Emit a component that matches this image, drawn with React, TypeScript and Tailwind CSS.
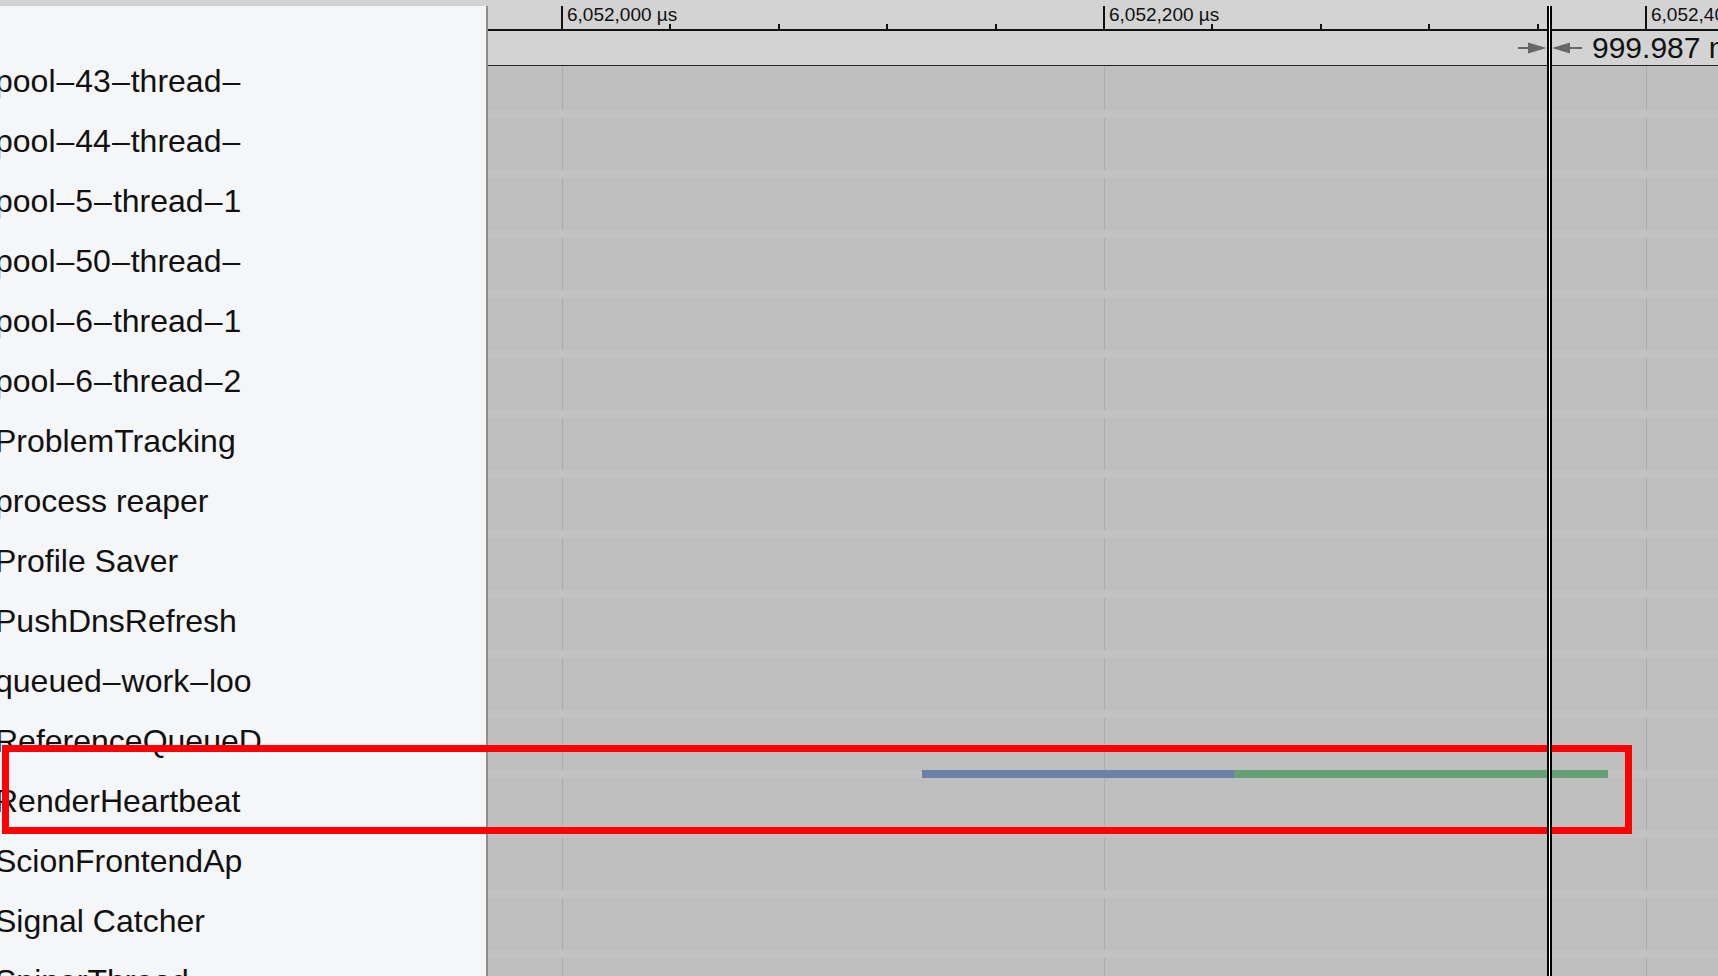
const TRACKS = [
  'pool-43-thread-',
  'pool-44-thread-',
  'pool-5-thread-1',
  'pool-50-thread-',
  'pool-6-thread-1',
  'pool-6-thread-2',
  'ProblemTracking',
  'process reaper',
  'Profile Saver',
  'PushDnsRefresh',
  'queued-work-loo',
  'ReferenceQueueD',
  'RenderHeartbeat',
  'ScionFrontendAp',
  'Signal Catcher',
  'SpinerThread',
];

// time axis: x of 6,052,000 µs inside the timeline, px per 200 µs
const ORIGIN = 74;
const MAJOR = 542;
const MAJORS = [0, 1, 2].map((i) => ({
  x: ORIGIN + MAJOR * i,
  label: `6,052,${(i * 200).toString().padStart(3, '0')} µs`,
}));
const MINORS = MAJORS.flatMap((m) => [1, 2, 3, 4].map((j) => m.x + (MAJOR / 5) * j));

// slices of the RenderHeartbeat thread
const SLICES = [
  { left: 434, width: 312, color: '#6c80a9' },
  { left: 746, width: 374, color: '#67a076' },
];

function ThreadName({ name }: { name: string }) {
  const parts = name.split('-');
  return (
    <>
      {parts.map((p, i) => (
        <span key={i}>
          {p}
          {i < parts.length - 1 && <span className="mx-[1px]">–</span>}
        </span>
      ))}
    </>
  );
}

function Ruler() {
  return (
    <div className="relative h-[25px] border-b-2 border-[#111]">
      {MAJORS.map((m) => (
        <div key={m.x}>
          <div className="absolute top-0 bottom-0 w-[2px] bg-[#111]" style={{ left: m.x - 1 }} />
          <span
            className="absolute top-[-1px] text-[19px] leading-none text-[#111] whitespace-nowrap"
            style={{ left: m.x + 5 }}
          >
            {m.label}
          </span>
        </div>
      ))}
      {MINORS.map((x) => (
        <div key={x} className="absolute bottom-0 h-[5px] w-[2px] bg-[#111]" style={{ left: x - 1 }} />
      ))}
    </div>
  );
}

function MeasureBar() {
  return (
    <div className="relative h-[35px] border-b border-[#222] flex items-center">
      <div className="absolute left-[1028px] flex items-center whitespace-nowrap">
        <svg width="68" height="14" viewBox="0 0 68 14" className="shrink-0">
          <line x1="2" y1="7" x2="14" y2="7" stroke="#666" strokeWidth="2" />
          <polygon points="12,1.5 30.5,7 12,12.5" fill="#666" />
          <polygon points="36,7 54,1.5 54,12.5" fill="#666" />
          <line x1="53" y1="7" x2="66" y2="7" stroke="#666" strokeWidth="2" />
        </svg>
        <span className="ml-2 text-[30px] leading-none text-[#111]">999.987 ns</span>
      </div>
    </div>
  );
}

function TrackRow({ name, slices }: { name: string; slices: typeof SLICES }) {
  return (
    <div className="flex h-[60px] shrink-0">
      <div className="w-[488px] shrink-0 overflow-hidden bg-[#f5f6f8] border-r-2 border-[#8e8e8e] pt-[15px]">
        <div className="-ml-[5px] text-[32px] leading-[32px] text-[#111] whitespace-nowrap">
          <ThreadName name={name} />
        </div>
      </div>
      <div className="flex-1 flex flex-col bg-[#bfbfbf]">
        <div className="relative h-2 bg-[#c2c2c2]">
          {slices.map((s) => (
            <div
              key={s.left}
              className="absolute top-0 h-2"
              style={{ left: s.left, width: s.width, background: s.color }}
            />
          ))}
        </div>
        <div className="relative flex-1">
          {MAJORS.map((m) => (
            <div key={m.x} className="absolute top-0 bottom-0 w-px bg-[#adadad]" style={{ left: m.x }} />
          ))}
        </div>
      </div>
    </div>
  );
}

export default function App() {
  return (
    <div className="relative w-[1718px] h-[976px] overflow-hidden bg-[#d3d3d3] pt-[6px] flex flex-col font-['Liberation_Sans',Arial,sans-serif]">
      {/* header: blank shell column + time ruler */}
      <div className="flex h-[60px] shrink-0">
        <div className="w-[488px] shrink-0 bg-[#f5f6f8] border-r-2 border-[#8e8e8e]" />
        <div className="flex-1 flex flex-col overflow-hidden">
          <Ruler />
          <MeasureBar />
        </div>
      </div>

      {/* tracks, scrolled a little */}
      <div className="flex-1 overflow-hidden">
        <div className="-mt-4 flex flex-col">
          {TRACKS.map((name) => (
            <TrackRow key={name} name={name} slices={name === 'RenderHeartbeat' ? SLICES : []} />
          ))}
        </div>
      </div>

      {/* annotation box */}
      <div className="absolute left-[2px] top-[745px] w-[1630px] h-[89px] border-[7px] border-[#ff0000] z-10" />

      {/* hover cursor */}
      <div className="absolute left-[1547px] top-[6px] bottom-0 w-[5px] border-x-2 border-black bg-white z-20" />
    </div>
  );
}
